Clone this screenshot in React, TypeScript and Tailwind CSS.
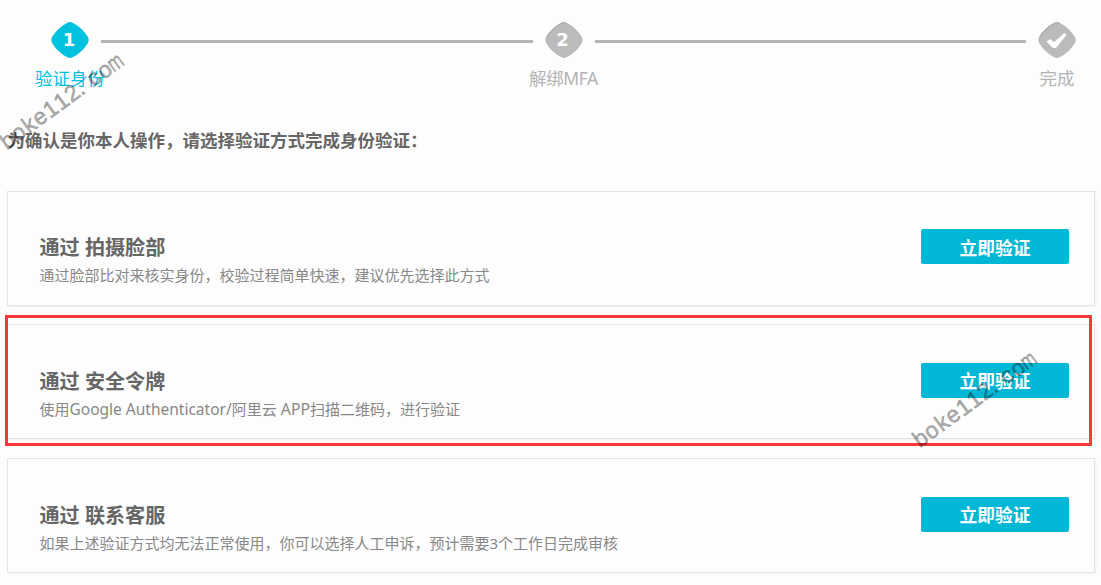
import { Fragment } from "react"

const steps = [
  { label: "验证身份", mark: "1", active: true },
  { label: "解绑MFA", mark: "2", active: false },
  { label: "完成", mark: "check", active: false },
]

const methods = [
  {
    title: "通过 拍摄脸部",
    description: "通过脸部比对来核实身份，校验过程简单快速，建议优先选择此方式",
  },
  {
    title: "通过 安全令牌",
    description: (
      <>
        使用<span className="text-[15.5px]">Google Authenticator/</span>阿里云
        <span className="text-[15.8px]"> APP</span>扫描二维码，进行验证
      </>
    ),
  },
  {
    title: "通过 联系客服",
    description: "如果上述验证方式均无法正常使用，你可以选择人工申诉，预计需要3个工作日完成审核",
  },
]

function StepMark({ mark, active }: { mark: string; active: boolean }) {
  return (
    <div className="relative flex h-9 w-[38px] items-center justify-center">
      <svg className="absolute inset-0" width="38" height="36" viewBox="0 0 38 36">
        <path
          d="M16 .9Q19 -.8 22 .9Q31 5.5 36.8 14.8Q38.6 18 36.8 21.2Q31 30.5 22 35.1Q19 36.8 16 35.1Q7 30.5 1.2 21.2Q-.6 18 1.2 14.8Q7 5.5 16 .9Z"
          fill={active ? "#00c1de" : "#bbbbbb"}
        />
        {!active && (
          <path
            d="M1.8 15Q7.3 6.3 16.2 1.5Q19 0 21.8 1.5"
            fill="none"
            stroke="#a9a9a9"
            strokeWidth="1.2"
          />
        )}
        {mark === "check" && <path d="M8.5 19.5L12.5 17L16 20.2L26.5 10.8L28.5 13L18 26H15Z" fill="#fff" />}
      </svg>
      {mark !== "check" && (
        <span className="relative -left-px font-['DejaVu_Sans'] text-lg leading-none font-bold text-white">{mark}</span>
      )}
    </div>
  )
}

function Watermark() {
  return (
    <div className="flex w-[146px] -rotate-[36deg] font-['Liberation_Sans'] text-[23px] leading-6 text-black/30 [-webkit-text-stroke:0.7px_rgba(0,0,0,0.3)]">
      {"boke112.com".split("").map((char, index) => (
        <span key={index} className="flex w-[13.3px] shrink-0 justify-center">
          <span className={char === "m" ? "scale-x-75" : char === "." ? "-translate-x-1" : ""}>{char}</span>
        </span>
      ))}
    </div>
  )
}

export default function App() {
  return (
    <main className="relative h-[585px] w-[1101px] overflow-hidden bg-[#fdfdfd] pt-[22px] font-['Noto_Sans','Noto_Sans_CJK_SC',sans-serif]">
      <div className="flex items-start pr-[25px] pl-[51px]">
        {steps.map((step, index) => (
          <Fragment key={step.label}>
            {index > 0 && <div className="mx-3 mt-[18px] h-[3px] flex-1 bg-[#b5b5b5]" />}
            <div className="flex w-[38px] flex-col items-center">
              <StepMark mark={step.mark} active={step.active} />
              <span
                className={`mt-2 text-[17.5px] leading-6 whitespace-nowrap ${
                  step.active ? "text-[#00c1de]" : "text-[#b3b3b3]"
                } ${step.label === "解绑MFA" ? "tracking-[-0.4px]" : ""}`}
              >
                {step.label}
              </span>
            </div>
          </Fragment>
        ))}
      </div>

      <h1 className="mt-[38px] ml-[7.5px] text-[17.5px] leading-6 font-bold text-[#666]">
        为确认是你本人操作，请选择验证方式完成身份验证：
      </h1>

      <div className="mt-[38.6px] flex flex-col gap-[18.7px] pr-1.5 pl-[7px]">
        {methods.map((method) => (
          <section
            key={method.title}
            className="flex h-[115px] items-start justify-between border border-[#e3e4e4] pr-[25px] pl-[31.5px] shadow-[1px_1px_2px_rgba(0,0,0,0.05)]"
          >
            <div className="pt-[42.6px]">
              <h2 className="text-[20.1px] leading-7 font-bold text-[#666]">{method.title}</h2>
              <p className="mt-px text-[15px] leading-6 text-[#888]">{method.description}</p>
            </div>
            <button className="mt-[37.7px] h-[35px] w-[148px] rounded-[2px] bg-[#00b7d5] pt-0.5 text-[17.7px] font-bold text-white">
              立即验证
            </button>
          </section>
        ))}
      </div>

      <div className="pointer-events-none absolute top-[315px] left-[5px] h-[131px] w-[1087px] border-3 border-[#fc3737]" />
      <div className="pointer-events-none absolute top-[89px] -left-[12px]">
        <Watermark />
      </div>
      <div className="pointer-events-none absolute top-[387px] left-[901px]">
        <Watermark />
      </div>
    </main>
  )
}
